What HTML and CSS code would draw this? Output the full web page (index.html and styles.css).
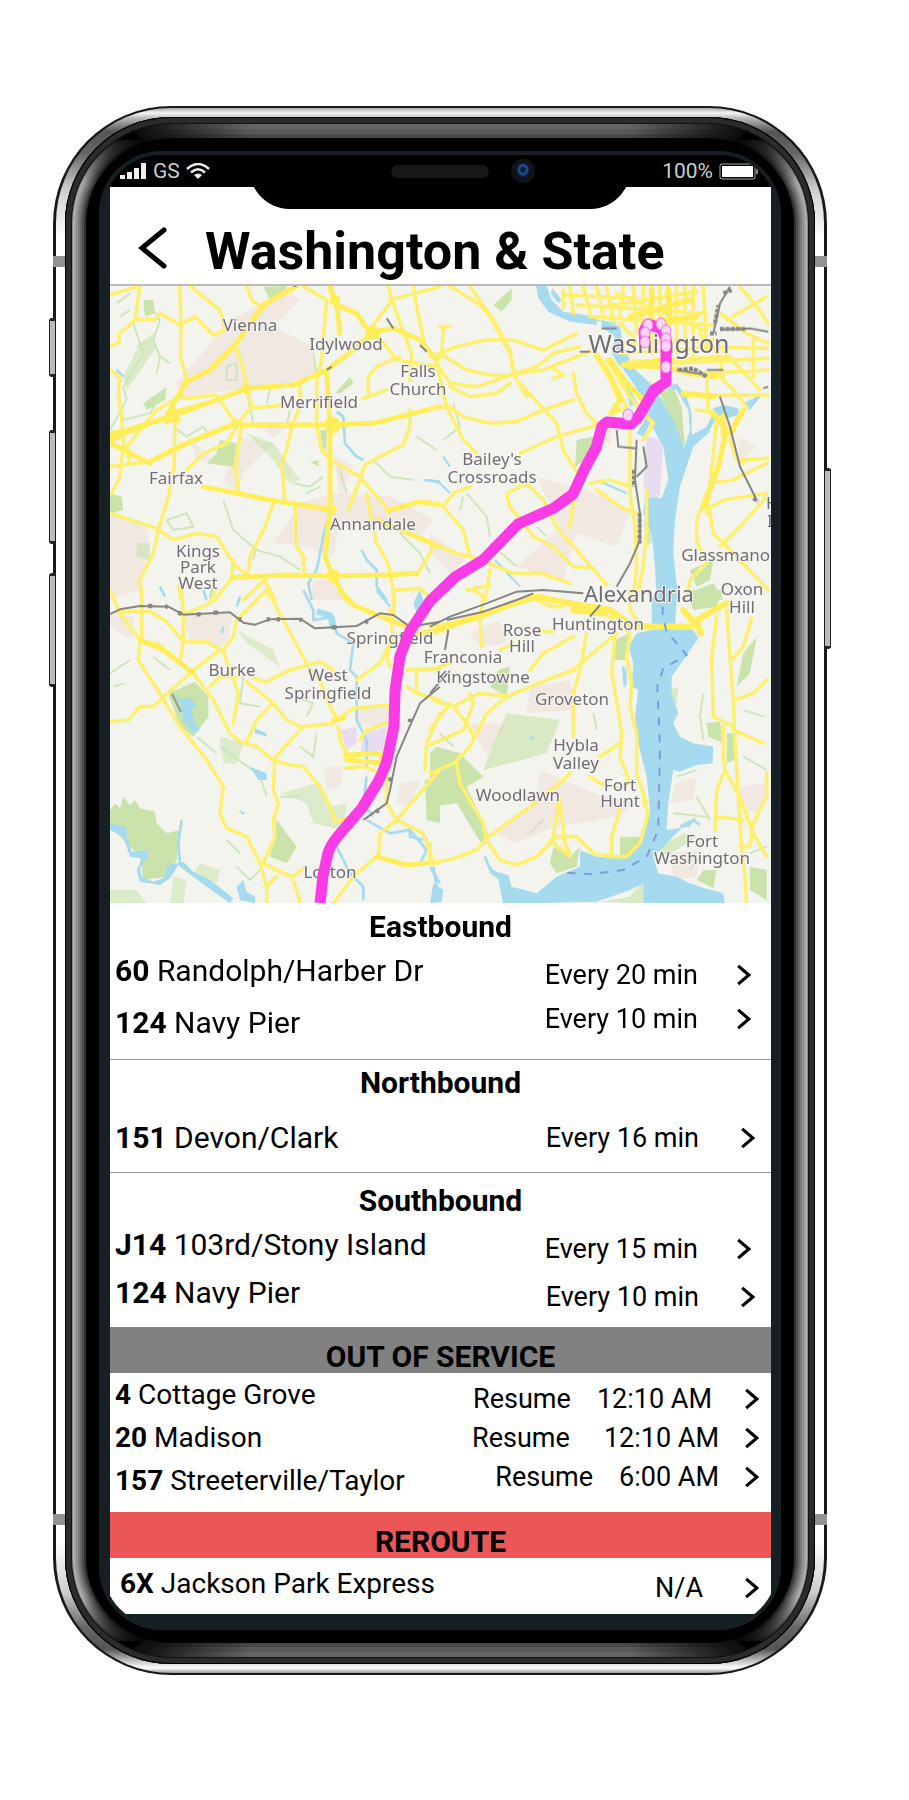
FILE: index.html
```html
<!DOCTYPE html>
<html lang="en">
<head>
<meta charset="utf-8">
<meta name="viewport" content="width=device-width, initial-scale=1">
<title>Washington &amp; State</title>
<link rel="stylesheet" href="styles.css">
</head>
<body>
<svg class="sprite" aria-hidden="true">
  <symbol id="chevron" viewBox="0 0 14 20"><path d="M2 1.500 12 10 2 18.500" fill="none" stroke="#000" stroke-width="3"/></symbol>
</svg>
<div class="phone">
  <span class="key key--mute"></span><span class="key key--up"></span><span class="key key--down"></span><span class="key key--power"></span>
  <div class="chrome"><div class="gasket"><div class="bezel"><div class="glass"><div class="screen">
    <div class="status">
      <div class="status-group">
        <svg width="27" height="16" viewBox="0 0 27 16" fill="#eee" aria-hidden="true"><path d="M0 12h5v4H0zM7 9h5v7H7zM14 5h5v11h-5zM21 0h5v16h-5z"/></svg>
        <span>GS</span>
        <svg width="24" height="16" viewBox="0 0 24 16" fill="none" stroke="#eee" stroke-width="2.500" aria-hidden="true"><path d="M1 6Q12-4 23 6M5 9.500Q12 3 19 9.500"/><path d="M8 12q4-3 8 0l-4 4z" fill="#eee" stroke="none"/></svg>
      </div>
      <div class="status-group status-group--power">
        <span>100%</span>
        <svg width="40" height="17" viewBox="0 0 40 17" aria-hidden="true"><rect x="1" y="1" width="35" height="15" rx="2" fill="#000" stroke="#aaa"/><rect x="3" y="3" width="31" height="11" fill="#fff"/><path d="M38 6v5" stroke="#888" stroke-width="2"/></svg>
      </div>
    </div>
    <div class="notch"><span class="speaker"></span><span class="camera"></span></div>
    <header class="title">
      <button class="back" type="button" aria-label="Back"><svg width="30" height="42" viewBox="0 0 30 42" aria-hidden="true"><path d="M27 3 5 21 27 39" fill="none" stroke="#000" stroke-width="5" stroke-linecap="round"/></svg></button>
      <h1>Washington &amp; State</h1>
    </header>
    <svg class="map" viewBox="0 0 661 617" preserveAspectRatio="xMidYMid slice" role="img" aria-label="Route map">
      <rect width="661" height="617" fill="#f4f4ef"/>
      <!-- Built-up areas -->
      <g fill="#f1e5df" opacity=".8">
        <g transform="translate(-10 -6) scale(.3333)"><path d="M390 120 560 30 600 60 520 140 640 200 650 280 560 310 240 350 230 310ZM30 700 140 740 150 800 120 930 30 960ZM420 470 520 490 430 580 410 640 370 600ZM600 670 700 640 880 650 1000 720 960 770 900 720 720 730 700 830 620 800 520 790ZM700 520 760 560 720 650ZM640 900 720 900 740 960 630 960ZM270 480 370 560 290 540ZM470 430 560 440 520 475Z"/></g>
        <g transform="translate(320 -6) scale(.3333)"><path d="M320 590 500 640 600 700 560 800 440 760 400 900 260 860 390 740ZM480 420 550 430 540 500ZM930 470 980 500 920 550ZM0 760 110 840 60 880 0 820Z"/></g>
        <g transform="translate(-10 304) scale(.3333)"><path d="M250 80 400 70 380 170 270 160ZM30 70 100 80 100 150 30 110ZM770 360 870 340 870 400 780 410ZM670 530 730 530 720 590 680 600ZM900 580 960 570 930 650 890 640Z"/></g>
        <g transform="translate(320 304) scale(.3333)"><path d="M120 130 210 90 230 160 150 170ZM300 290 420 270 440 360 290 370ZM120 400 230 400 170 500ZM330 540 520 620 620 640 560 680 380 710 250 760 190 720 320 640ZM740 580 800 560 790 630 720 640ZM930 590 1010 580 990 670 940 660ZM720 790 810 780 800 860 730 870Z"/></g>
      </g>
      <!-- Parks -->
      <g fill="#c9e3ab">
        <g transform="translate(-10 -6) scale(.3333)"><path d="M490 20 560 18 545 50 510 60ZM360 480 410 490 400 560 320 550 350 520ZM30 640 65 650 70 690 30 700ZM660 450 680 450 680 510 665 500ZM630 545 655 540 655 560ZM705 340 750 290 760 310 720 340ZM130 60 160 60 165 100 135 110ZM130 370 200 320 195 360 140 390Z"/><path d="M120 190 160 160 170 200 80 330 70 290ZM440 460 520 490 570 560 600 600 570 610 520 540ZM110 790 150 790 150 840 110 830Z" opacity=".6"/></g>
        <g transform="translate(320 -6) scale(.3333)"><path d="M690 340 730 320 755 380 765 500 740 470ZM440 480 490 470 480 530 435 560ZM190 75 245 25 245 60 215 95ZM780 870 850 840 840 900 800 920ZM800 930 850 910 880 960 790 960Z"/><path d="M640 340 690 340 660 300ZM640 720 680 710 670 780 650 800Z" opacity=".7"/></g>
        <g transform="translate(-10 304) scale(.3333)"><path d="M205 310 285 275 325 320 325 380 280 440 240 410ZM30 660 45 640 60 655 70 620 90 645 105 630 120 655 165 665 170 700 200 730 240 720 230 810 200 860 130 870 120 800 30 710ZM530 690 590 770 560 820 510 800ZM975 570 1020 560 1020 700 980 690Z"/><path d="M360 440 430 460 410 520 370 520ZM540 610 650 580 690 650 740 640 730 720 640 700 620 640ZM410 120 520 180 540 230 440 160ZM30 900 110 900 140 940 30 940ZM220 860 260 870 250 940 210 940ZM300 820 360 840 350 880 280 850Z" opacity=".55"/></g>
        <g transform="translate(320 304) scale(.3333)"><path d="M555 150 600 130 590 210 555 210ZM20 470 90 490 160 560 110 590 180 740 160 770 80 640 0 650 0 490ZM370 770 420 800 450 770 440 830 380 850 360 820ZM570 740 630 740 620 790 570 800ZM770 0 880 0 860 50 790 60ZM940 190 980 140 960 250 920 290ZM830 400 870 395 880 460 835 440ZM890 430 915 430 915 510 890 520ZM820 840 860 840 850 895 800 870ZM960 830 1010 840 1010 930 960 900ZM205 240 240 230 230 320 180 290Z"/><path d="M230 370 390 390 350 490 160 540 190 460ZM690 770 760 730 800 740 740 780 690 800ZM510 935 600 920 640 870 640 940ZM720 300 745 290 740 350Z" opacity=".65"/></g>
      </g>
      <g fill="#e8dcf1"><g transform="translate(320 -6) scale(.3333)"><path d="M650 470 700 480 690 650 660 660 640 620Z"/></g><g transform="translate(-10 304) scale(.3333)"><path d="M720 420 770 410 770 460 740 480ZM790 430 860 410 850 490 780 500Z"/></g></g>
      <!-- Woodland streams -->
      <g fill="none" stroke="#cfe5bd" stroke-width="6" stroke-linejoin="round">
        <g transform="translate(-10 -6) scale(.3333)"><path d="M50 70 90 40M60 110 90 90M110 200 160 180 180 230 170 280M160 180 180 120 160 90M180 230 210 250M100 130 130 220 70 320 80 360 30 450M70 420 150 400 190 330M380 260 410 250 410 300 380 300ZM220 440 260 470 310 440 330 470M440 340 460 430M510 330 500 370M570 390 560 440M580 610 630 620 670 590M620 640 660 620M820 540 870 590 940 600M950 470 1010 510M370 660 400 750 470 810 540 830 600 870M470 790 460 840M200 720 260 700 280 740 220 750ZM900 760 960 820 990 880M720 570 740 640M640 220 650 280"/></g>
        <g transform="translate(320 -6) scale(.3333)"><path d="M70 370 90 440 40 480M110 640 170 710 180 770M100 650 90 690M180 790 260 860M320 740 350 770M480 120 560 130"/></g>
        <g transform="translate(-10 304) scale(.3333)"><path d="M30 250 90 210M40 290 70 280M160 200 210 240M290 440 350 490M360 470 430 520 470 550M430 260 420 340 480 350M650 430 640 500 600 470M380 750 420 790M410 830 450 870 480 840M480 560 500 620M590 320 640 340 620 380M540 620 600 620"/></g>
        <g transform="translate(320 304) scale(.3333)"><path d="M820 310 810 380 820 450M500 420 490 370M30 430 70 470M740 560 800 540M730 670 830 680M940 360 1000 380M300 730 340 690M940 500 1010 540M780 840 810 800M960 790 1010 770M800 620 840 690"/></g>
      </g>
      <!-- Rivers and lakes -->
      <g fill="#a6daee" stroke="none">
        <g transform="translate(320 -6) scale(.3333)">
          <path d="M318 18 350 18 365 60 400 95 500 110 500 135 420 125 355 95 325 55ZM368 25 395 60 385 70 362 40ZM515 120 570 140 580 200 600 240 570 260 545 220 555 170 515 140ZM575 262 600 255 650 300 690 350 735 430 762 505 780 450 775 390 740 330 710 320 740 310 770 350 785 400 785 465 830 440 850 400 855 420 835 460 790 500 770 560 750 620 735 720 730 820 745 960 680 960 675 860 665 760 640 700 645 650 695 655 715 600 700 500 650 410 640 360 610 310ZM850 385 880 375 925 385 925 405 890 415 850 400ZM940 370 1000 340 960 390ZM585 310 620 370 600 380ZM620 460 650 410 660 430 640 470Z"/>
        </g>
        <g transform="translate(320 304) scale(.3333)">
          <path d="M665 20 740 30 735 110 790 120 805 145 760 210 725 260 725 310 745 370 730 400 750 440 790 460 850 470 848 520 800 525 750 545 730 540 715 640 710 720 780 710 800 680 770 700 700 770 670 800 685 850 740 860 780 880 810 890 880 910 885 940 640 942 640 880 600 900 500 935 220 942 205 870 180 840 235 855 245 890 320 910 380 860 450 830 450 780 500 800 590 805 635 760 660 660 650 560 625 460 615 380 625 300 605 290 610 220 595 170 620 130 665 120Z"/>
          <path d="M590 230 590 285 580 260ZM160 800 190 840 205 850 190 860ZM10 880 40 900 35 935 0 940Z"/>
        </g>
        <g transform="translate(-10 304) scale(.3333)">
          <path d="M218 310 245 330 265 320 290 345 275 360 285 400 300 420 280 430 250 390 240 340ZM30 700 80 710 80 740 95 785 145 780 140 805 120 830 125 860 160 875 190 865 205 825 250 815 280 845 330 870 400 925 390 940 320 890 265 850 235 825 210 865 180 885 120 875 110 840 125 805 90 800 70 740 30 720ZM410 890 430 870 440 905 465 920 465 940 420 930ZM465 415 500 430 500 440 465 430ZM450 530 500 550 500 570 475 570ZM415 660 435 668 430 676ZM960 0 980 60 950 70 940 40Z"/>
        </g>
      </g>
      <g fill="none" stroke="#a6daee" stroke-width="8" stroke-linejoin="round">
        <g transform="translate(-10 -6) scale(.3333)"><path d="M685 715 670 770 650 870 625 910 635 960M710 395 730 410 735 490 770 530 790 540M785 810 800 840 830 870 830 920 860 960M970 600 1020 605M180 920 195 950M340 920 330 955M50 270 70 290"/></g>
        <g transform="translate(320 -6) scale(.3333)"><path d="M0 600 30 610 60 640M40 530 60 560M500 600 590 640M195 840 270 920M590 320 620 370" stroke-width="6"/></g>
        <g transform="translate(-10 304) scale(.3333)"><path d="M610 0 640 60 640 90 700 80 710 130 760 160 750 240 770 260 770 390 800 450 800 530M800 560 790 640 820 680M830 0 870 50M710 770 750 850 790 890 790 930M800 690 870 730 930 720 980 780 960 820M310 0 320 30M420 20 410 50M245 690 235 760 240 820M370 110 365 130M990 830 1020 880M930 710 930 740 970 750"/><path d="M650 65 690 75 700 115" stroke-width="18"/></g>
        <g transform="translate(320 304) scale(.3333)"><path d="M580 230 585 290M750 710 790 690 810 705M300 440 310 450M165 800 185 850M10 830 20 890M780 910 870 915"/></g>
      </g>
      <!-- Roads -->
      <g fill="none" stroke="#fdf070" stroke-width="11" stroke-linejoin="round" stroke-linecap="round">
        <g transform="translate(-10 -6) scale(.3333)">
          <path d="M30 45 120 18 105 120 55 165 60 185 30 200M105 118 165 118 180 100 240 135 285 110 340 165 375 150 360 90 270 18M240 18 243 135 242 230 258 290 240 350 170 390 80 500 90 550M440 18 455 60 490 85M30 270 60 290 55 350 65 400 70 490 60 590 35 640M30 560 150 545 210 510 280 480 400 430M225 420 222 570M220 570 205 650 190 700 175 750 160 820 120 900 125 960M260 570 310 520 380 490 430 410 450 385 550 375M235 345 255 355 350 345 400 420M425 440 405 560 415 630M405 195 430 260 440 330 455 375M600 310 600 380 575 440 560 510 545 550 555 660M520 670 495 740 450 830 443 890M585 680 590 800 610 830 612 885M790 355 860 330M805 350 805 290 830 260 900 230M610 18 680 60 665 240 650 300 650 440 665 510 690 540 780 590 865 690M930 390 930 440 910 495 840 530 795 555 780 600 745 690M800 640 815 720 830 790 865 850 885 960M950 885 990 820 1000 790M30 700 170 745 220 780 290 760 350 770 400 850 445 890M395 890 400 840M395 895 345 960M495 900 525 960M495 900 430 960M885 930 960 925 1000 960M865 18 890 100 935 220 930 300M940 18 950 80 975 200M870 70 800 160M820 150 890 240 1010 260M870 60 1020 20M235 920 245 960"/>
          <g stroke="#ffee5a" stroke-width="15"><path d="M590 18 490 75 405 195 330 270 260 305 215 380M30 465 200 415 350 360 440 325 580 315 680 270 760 210 820 155 880 145 960 180 1010 240M30 490 150 550M30 475 190 415M210 400 340 365M235 420 215 380 200 425M690 20 710 70 720 160M710 75 770 100 810 160M690 18 700 60M150 545 270 485 400 435 690 435 820 430 1020 380M310 620 510 660 700 690M680 280 690 430 690 690M690 690 675 830 700 890 740 960M395 893 550 885 700 888 860 885 950 880M865 692 960 665 1020 675M830 720 1020 800"/></g>
        </g>
        <g transform="translate(320 -6) scale(.3333)">
          <path d="M60 18 150 75 180 110 240 220 260 300 380 430 400 510 450 590M120 18 190 120 240 210 250 280 290 350M30 140 60 140M40 145 35 220 20 250 60 310 140 320 260 280M0 230 80 200 170 180 250 180 340 210 440 160M30 220 110 270 180 285 240 285 320 260 370 220 450 200M260 280 340 270 440 230 490 210M370 265 400 285 370 295M430 280 440 340 470 400 500 430M60 320 120 350 200 340 240 310M0 385 60 380 100 410 180 430 260 425 340 390 430 360M20 250 50 380 100 480 140 520M270 520 380 470 520 430M480 610 540 600 600 620M230 640 290 610 340 660 380 740 440 810 530 915M230 640 240 680 310 770 370 800 430 860 490 865M430 660 420 740M120 620 70 640 40 680 0 665M40 680 100 750 120 830M0 790 80 820 150 840 250 880 330 880 420 910M180 870 165 960M110 930 180 915M500 630 570 680 620 700M650 630 650 750 640 860 620 960M600 440 600 560 600 640 615 740 620 860 610 960M520 250 570 340 590 380 550 400M530 240 600 350 640 400 670 430 640 480M800 390 840 395 855 410M860 420 850 520 840 620 800 720 800 780 830 850 780 900 765 960M840 610 910 600 1010 550M930 540 1015 535M830 690 880 660 1010 640M835 670 850 760 910 820 1015 930M900 480 920 540 940 550M1010 650 940 730 870 800M840 620 830 700"/>
          <path d="M400 30 400 85M420 20 430 100M460 18 480 100M500 18 520 110M530 20 550 120M580 18 570 110M610 18 620 160M640 18 635 190M665 18 665 220M690 18 690 140M715 18 715 240M740 18 740 220M765 18 765 190M790 20 790 230M820 20 830 200M400 45 620 55M440 75 830 100M480 110 850 135M520 80 800 35M560 40 820 150M580 190 850 180M570 220 870 200M600 245 900 230M570 130 610 170M760 345 1015 345M720 250 1015 235M820 200 1010 205M820 280 1015 270M830 300 835 390M860 280 900 320 950 380M880 210 990 330M970 180 970 290M810 160 870 230 880 290M890 120 1010 50M930 20 980 80 1015 130M870 100 950 160 1015 190"/>
          <g stroke="#ffee5a" stroke-width="17"><path d="M490 210 540 290 570 360 545 400M540 240 590 310 640 360M580 255 700 260 780 280 860 290M640 130 800 110M760 340 850 350M850 400 900 460 940 390M880 410 880 460 910 450M885 470 865 560 820 680M600 260 720 235M665 30 665 130M715 30 720 130M600 110 780 60"/></g>
        </g>
        <g transform="translate(-10 304) scale(.3333)">
          <path d="M30 0 60 70 120 150 115 210 160 280 240 410 320 510 370 590 360 670 380 715 440 740 480 820 500 890 500 940M125 0 125 150 180 165 240 220 280 250 340 330 390 430 420 455 470 470 520 510 590 430 610 410 700 400 760 355 870 345M50 65 150 65 200 95 250 155 320 155 370 185 390 240 415 310 400 400M245 0 250 60 250 150 240 220M345 0 330 40 260 70M500 0 410 90 400 140 370 180M500 0 545 80 620 220M30 395 85 390 120 350 160 350 280 240 360 180M330 290 360 260 420 260M460 265 500 275 570 240 660 215 700 240M440 275 520 340 560 390 600 410M520 340 470 390 440 455M620 225 660 270 690 350 710 385M525 510 520 600 535 640 520 690 525 740 490 820M520 510 570 525 610 530 660 590 690 650 705 695 770 680M490 820 550 850 580 860 610 835M500 890 530 860M580 870 600 935M700 940 760 860 830 800M715 410 720 450 740 490M780 450 800 420 860 400M735 535 790 530 830 545M860 500 860 640 890 690 1020 540M890 690 840 730 835 800M890 690 970 730 995 800M870 60 880 140 840 220 770 270M870 230 860 200 870 170M920 290 950 310 1020 330M920 240 1020 235M950 240 950 300M1020 370 980 460 975 540M880 0 880 80"/>
          <g stroke="#ffee5a" stroke-width="15"><path d="M720 0 760 45 830 75 920 110M120 150 190 180 280 250M830 800 920 825 1020 815M700 390 730 385M735 495 840 490 850 520 740 510M900 140 1020 120"/></g>
        </g>
        <g transform="translate(320 304) scale(.3333)">
          <path d="M0 110 60 100M130 0 160 20 150 90 155 170M340 125 370 125M210 180 250 160M470 130 450 240 430 310 430 440M300 240 340 190 430 140M560 130 500 180 430 240 350 270 230 320 170 370 120 470 70 520 0 550M0 240 60 220M10 330 70 350 110 400 130 440M0 420 60 340M70 350 150 310 240 320M0 465 100 420 130 340 120 310M80 520 90 580 160 700 170 750 210 810 260 825 320 800 380 740 440 740 490 790 540 800 590 800 630 760 655 670 640 630M0 815 60 810 140 780 170 745 300 650 400 570 420 550M370 740 385 640M390 630 405 760 420 790M360 750 420 800M545 800 545 740 570 660M480 560 510 580 560 590M510 500 570 460M555 140 545 250 560 330 575 430 570 500 590 550 595 580M600 130 590 200 605 280 600 350 620 430 620 550 650 640M860 80 845 200 850 380 910 410M890 60 900 200 910 330 915 450 930 700 935 770 945 860 950 940M965 85 940 170 905 210M915 330 970 310 1010 270M910 420 1000 460M880 410 880 500 885 540 860 600 855 720M885 540 930 620 970 730 1010 800M860 680 940 690M930 770 960 770 970 700 1010 620 1010 550M0 810 0 760M300 20 360 50 400 50M500 60 540 80 600 130M600 0 600 60 620 90"/>
          <g stroke="#ffee5a" stroke-width="19"><path d="M0 130 80 100 160 75 250 40 320 20 420 40 540 60 610 110 780 110 800 90 890 40M760 60 810 120M430 60 520 70M800 90 810 130"/></g>
        </g>
      </g>
      <g fill="#ffee5a" transform="translate(-10 -6) scale(.3333)"><circle cx="213" cy="408" r="20"/><circle cx="440" cy="328" r="16"/><circle cx="697" cy="435" r="25"/><circle cx="705" cy="60" r="16"/><circle cx="818" cy="158" r="22"/><circle cx="700" cy="888" r="20"/><circle cx="42" cy="468" r="18"/><circle cx="697" cy="690" r="14"/><circle cx="407" cy="430" r="14"/></g>
      <!-- Railways -->
      <g fill="none" stroke="#858585" stroke-width="6" stroke-linejoin="round">
        <g transform="translate(-10 304) scale(.3333)"><path d="M30 72 60 58 120 48 205 50 250 74 390 67 430 98 465 104 510 88 600 86 645 115 770 108 840 70 880 75 930 110 1020 95M1020 290 960 340 920 430 890 500 870 600 860 640 790 690"/><path d="M145 48h12M195 50h8M235 68 245 72M290 73h12M340 68h14M415 88h10M500 88h10M530 88h10M600 88 606 92M695 112h14M795 98 803 92M930 386 930 396M872 562 871 574M828 666 836 660" stroke-width="13"/></g>
        <g transform="translate(320 304) scale(.3333)"><path d="M0 110 60 80 170 40 260 5 340 0 460 10M50 90 160 65 260 30 310 10M55 120 45 180M0 310 60 240M480 80 510 45"/></g>
        <g transform="translate(320 -6) scale(.3333)"><path d="M560 920 600 850 630 780 630 700 615 600 620 480M560 450 565 500 620 505M640 500 650 560 620 590M850 160 870 70 900 20M740 270 830 285M870 150 960 145 1015 155M870 350 900 440 930 560 980 660M450 215 480 215M515 145H560M830 270H880M1000 325 1015 320M700 330 650 370 630 430"/><path d="M745 270 790 265 830 290M855 130 865 75M880 40 905 30M840 160H860M970 655 985 665M870 147H950M629 700V790M612 570V620" stroke-width="12" stroke-dasharray="12 4"/></g>
        <g transform="translate(-10 -6) scale(.3333)"><path d="M860 115 880 145M580 18H590M680 270 695 260M960 195 980 215"/></g>
      </g>
      <path d="m211 310 9 18" transform="translate(-149 98)" stroke="#999" stroke-width="2"/>
      <g fill="none" stroke="#7c9bdd" stroke-width="6" stroke-dasharray="25 25" transform="translate(320 304) scale(.3333)"><path d="M698 0V80L710 125 770 195 700 235 682 290 690 470 685 720 650 800 580 840 480 853 410 848"/></g>
      <!-- Place names -->
      <g class="places" text-anchor="middle">
        <text x="140" y="45">Vienna</text><text x="236" y="64">Idylwood</text><text x="308" y="91">Falls</text><text x="308" y="109">Church</text><text x="209" y="122">Merrifield</text>
        <text x="66" y="198">Fairfax</text><text x="263" y="244">Annandale</text><text x="88" y="271">Kings</text><text x="88" y="287">Park</text><text x="88" y="303">West</text>
        <text x="382" y="179">Bailey's</text><text x="382" y="197">Crossroads</text>
        <text x="660" y="275" text-anchor="end">Glassmano</text><text x="632" y="309">Oxon</text><text x="632" y="327">Hill</text>
        <text x="656" y="223" text-anchor="start">H</text><text x="657" y="241" text-anchor="start">I</text>
        <text x="280" y="358">Springfield</text><text x="353" y="377">Franconia</text><text x="373" y="397">Kingstowne</text><text x="412" y="350">Rose</text><text x="412" y="366">Hill</text><text x="488" y="344">Huntington</text>
        <text x="122" y="390">Burke</text><text x="218" y="395">West</text><text x="218" y="413">Springfield</text><text x="462" y="419">Groveton</text>
        <text x="466" y="465">Hybla</text><text x="466" y="483">Valley</text><text x="408" y="515">Woodlawn</text><text x="510" y="505">Fort</text><text x="510" y="521">Hunt</text>
        <text x="592" y="561">Fort</text><text x="592" y="578">Washington</text><text x="220" y="592">Lorton</text>
        <text class="city" x="549" y="67">Washington</text><text class="town" x="529" y="316">Alexandria</text>
      </g>
      <!-- Highlighted route -->
      <path d="M210 617 213 590 218 567Q221 558 228 550L252 522 268 496Q276 480 278 470L284 440 285 405 290 370 300 345 320 315 345 291 373 274 408 238 444 222 463 208 475 182 486 162 492 140 497 136 521 138 529 130 544 104 556 96V54L552 43 538 38 534 45 535 58" fill="none" stroke="#fb3be6" stroke-width="11" stroke-linejoin="round"/>
      <g fill="#ffd3fb" stroke="#f66be6" stroke-width="1"><ellipse cx="518" cy="129" rx="5" ry="6"/><ellipse cx="556" cy="81" rx="5" ry="6"/><ellipse cx="538" cy="39" rx="5" ry="6"/><ellipse cx="535" cy="47" rx="5" ry="6"/><ellipse cx="535" cy="56" rx="5" ry="6"/><ellipse cx="551" cy="38" rx="5" ry="6"/><ellipse cx="556" cy="45" rx="5" ry="6"/><ellipse cx="556" cy="53" rx="5" ry="6"/><ellipse cx="556" cy="60" rx="5" ry="6"/></g>
    </svg>
    <main>
      <section class="group group--east">
        <h2>Eastbound</h2>
        <a class="row row--drop row--inset" href="#r60"><span class="name"><b>60</b> Randolph/Harber Dr</span><span class="freq">Every 20 min</span><svg class="chevron"><use href="#chevron"/></svg></a>
        <a class="row row--lift row--inset" href="#r124e"><span class="name"><b>124</b> Navy Pier</span><span class="freq">Every 10 min</span><svg class="chevron"><use href="#chevron"/></svg></a>
      </section>
      <section class="group group--north">
        <h2>Northbound</h2>
        <a class="row" href="#r151"><span class="name"><b>151</b> Devon/Clark</span><span class="freq">Every 16 min</span><svg class="chevron"><use href="#chevron"/></svg></a>
      </section>
      <section class="group group--south">
        <h2>Southbound</h2>
        <a class="row row--drop row--inset" href="#j14"><span class="name"><b>J14</b> 103rd/Stony Island</span><span class="freq">Every 15 min</span><svg class="chevron"><use href="#chevron"/></svg></a>
        <a class="row row--drop" href="#r124s"><span class="name"><b>124</b> Navy Pier</span><span class="freq">Every 10 min</span><svg class="chevron"><use href="#chevron"/></svg></a>
      </section>
      <section>
        <h2 class="bar bar--out">OUT OF SERVICE</h2>
        <div class="group group--out">
          <a class="row row--drop row--edge" href="#r4"><span class="name"><b>4</b> Cottage Grove</span><span class="freq freq--pair"><span>Resume</span><span>12:10 AM</span></span><svg class="chevron"><use href="#chevron"/></svg></a>
          <a class="row row--edge row--late" href="#r20"><span class="name"><b>20</b> Madison</span><span class="freq freq--pair freq--wide"><span>Resume</span><span>12:10 AM</span></span><svg class="chevron"><use href="#chevron"/></svg></a>
          <a class="row row--lift row--edge row--late" href="#r157"><span class="name"><b>157</b> Streeterville/Taylor</span><span class="freq freq--pair"><span>Resume</span><span>6:00 AM</span></span><svg class="chevron"><use href="#chevron"/></svg></a>
        </div>
      </section>
      <section>
        <h2 class="bar bar--reroute">REROUTE</h2>
        <div class="group group--reroute">
          <a class="row row--drop row--edge" href="#r6x"><span class="name"><b>6X</b> Jackson Park Express</span><span class="freq">N/A</span><svg class="chevron"><use href="#chevron"/></svg></a>
        </div>
      </section>
    </main>
  </div></div></div></div></div>
</div>
</body>
</html>
```
FILE: styles.css
```css
* { box-sizing: border-box; }
body { margin: 0; padding: 106px 82px 124px 53px; background: #fff; color: #000; font-family: Roboto, "Liberation Sans", sans-serif; }
.sprite { position: absolute; width: 0; height: 0; }
h1, h2 { margin: 0; font-weight: 700; }

/* Device shell */
.phone { position: relative; padding: 2px 3px; border-radius: 118px; background: #191919; }
.chrome { position: relative; padding: 9px; border-radius: 115px;
  background: linear-gradient(#aaa 0, #f4f4f4 5px, #bbb 10px, #555 24px, #666 45px, #ccc 80px, #fff 130px, #fff calc(100% - 130px), #ccc calc(100% - 80px), #666 calc(100% - 45px), #555 calc(100% - 24px), #ddd calc(100% - 9px), #fff calc(100% - 5px), #999 100%); }
.chrome::before, .chrome::after { content: ""; position: absolute; left: -3px; right: -3px; height: 11px; background: #929292; }
.chrome::before { top: 148px; }
.chrome::after { bottom: 148px; }
.gasket { position: relative; z-index: 1; padding: 7px; border-radius: 106px; background: #2b2b2a; box-shadow: inset 0 0 0 1px #000, inset 0 0 0 6px #2b2b2a, inset 0 0 0 7px #111; }
.bezel { position: relative; padding: 27px; border-radius: 99px; background: #000; }
.bezel::before, .bezel::after { content: ""; position: absolute; inset: 0; border-radius: 99px; }
.bezel::before { clip-path: inset(16px 0);
  mask-image: linear-gradient(transparent 10px, #000 60px, #000 calc(100% - 60px), transparent calc(100% - 10px));
  box-shadow: inset 0 0 0 1px #888, inset 0 0 0 2px #b5b5b5, inset 0 0 0 4px #a3a3a3, inset 0 0 0 6px #909090, inset 0 0 0 8px #7a7a7a, inset 0 0 0 10px #646464, inset 0 0 0 12px #4c4c4c, inset 0 0 0 14px #303030; }
.bezel::after { clip-path: polygon(50px 0, calc(100% - 50px) 0, calc(100% - 90px) 30px, calc(100% - 90px) calc(100% - 30px), calc(100% - 50px) 100%, 50px 100%, 90px calc(100% - 30px), 90px 30px);
  box-shadow: inset 0 0 0 5px #666, inset 0 0 0 10px #5a5a5a, inset 0 0 0 14px #484848;
  mask-image: linear-gradient(to right, transparent 50px, #000 180px, #000 calc(100% - 180px), transparent calc(100% - 50px)); }
.glass { position: relative; z-index: 1; padding: 4px; border-radius: 62px; background: #151f24; }
.screen { position: relative; overflow: hidden; padding: 0 6px 12px 7px; border-radius: 58px; background: #151f24; }
.key { position: absolute; left: -4px; width: 6px; border: 1px solid #222; border-width: 3px 0 3px 1px; border-radius: 3px 0 0 3px; background: #bbb; }
.key--mute { top: 212px; height: 59px; }
.key--up { top: 324px; height: 114px; }
.key--down { top: 467px; height: 114px; }
.key--power { left: auto; right: -4px; top: 362px; height: 181px; border-width: 3px 1px 3px 0; border-radius: 0 3px 3px 0; }

/* Status bar */
.status { display: flex; justify-content: space-between; align-items: center; height: 32px; padding: 0 10px; background: #000; color: #ccc; font-size: 21px; }
.status-group { display: flex; align-items: center; gap: 6px; }
.status-group--power { padding-right: 2px; }
.notch { position: absolute; top: 0; left: 50%; width: 386px; height: 54px; margin-left: -193px; border-radius: 0 0 42px 42px / 0 0 48px 48px; background: #000; }
.speaker { position: absolute; left: 144px; top: 10px; width: 98px; height: 13px; border-radius: 7px; background: #171717; }
.camera { position: absolute; left: 264px; top: 4px; width: 24px; height: 24px; border-radius: 50%; background: radial-gradient(ellipse at 50% 45%, #0a1c3a 0 2px, #2159a0 4px, #0c1d38 6px, #101216 8px); }

/* Heading and map */
.title { display: flex; align-items: center; gap: 38px; min-height: 99px; padding: 32px 16px 0 27px; background: #fff; border-bottom: 2px solid #bbb; }
.title h1 { font-size: 52px; line-height: 56px; white-space: nowrap; }
.back { display: flex; margin: 0 0 8px; padding: 0; border: 0; background: none; }
.map { display: block; width: 100%; height: auto; background: #f4f4ef; }
.places { font-family: "Noto Sans", sans-serif; font-size: 17px; fill: #716d76; stroke: #f6f5f0; stroke-width: 2px; paint-order: stroke; }
.places .city { font-size: 25px; }
.places .town { font-size: 22px; }

/* Route lists */
main { background: #fff; }
h2 { font-size: 30px; line-height: 32px; text-align: center; }
.group { display: flex; flex-direction: column; }
.group--east { padding: 8px 0 20px; gap: 12px; border-bottom: 1px solid #999; }
.group--north { padding: 7px 0 16px; gap: 21px; border-bottom: 1px solid #999; }
.group--south { padding: 12px 0 14px; gap: 12px; }
.group--out { padding: 6px 0 15px; gap: 5px; }
.group--reroute { padding: 10px 0 10px 5px; }
.row { display: flex; align-items: center; min-height: 36px; padding: 0 16px 0 5px; color: #000; text-decoration: none; font-size: 30px; line-height: 32px; }
.name { flex: 1; white-space: nowrap; }
.freq { font-size: 27px; margin-right: 41px; white-space: nowrap; }
.freq--pair { display: flex; gap: 26px; }
.freq--pair.freq--wide { gap: 34px; }
.chevron { width: 15px; height: 32px; }
.row--inset { padding-right: 20px; }
.row--inset .freq { margin-right: 38px; }
.row--edge { padding-right: 12px; font-size: 28px; }
.row--edge .freq--pair { margin-right: 32px; }
.row--late .freq--pair { margin-right: 25px; }
.row--drop .name, .row--lift .freq, .row--lift .chevron { align-self: flex-start; }
.row--drop .freq, .row--drop .chevron, .row--lift .name { align-self: flex-end; }
.bar { padding-top: 14px; }
.bar--out { background: #818181; }
.bar--reroute { background: #eb5757; }
```
